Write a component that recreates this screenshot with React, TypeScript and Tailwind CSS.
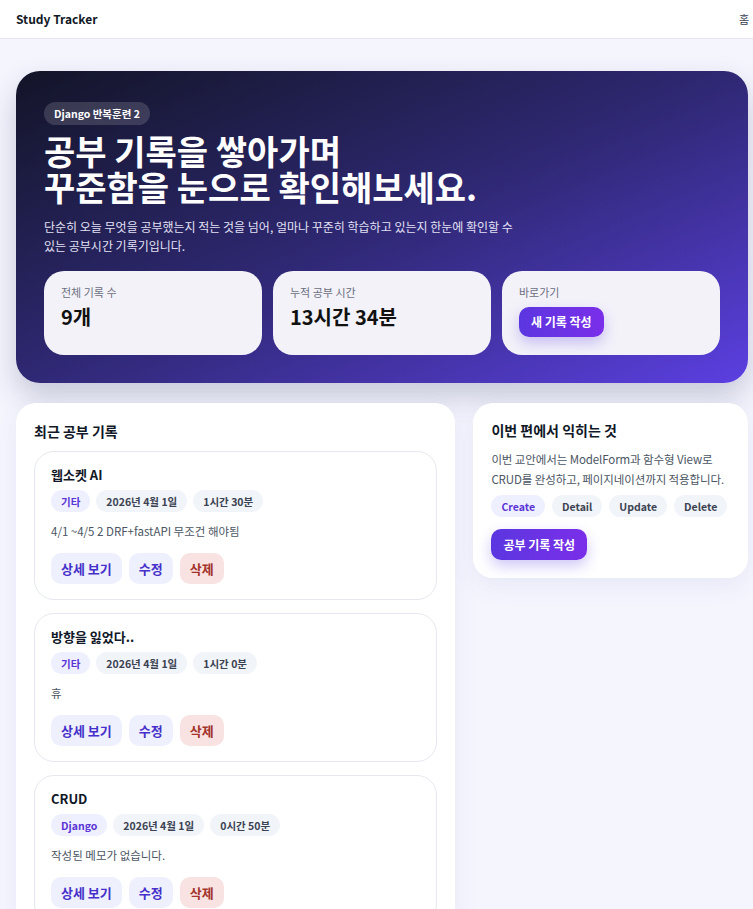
const font = { fontFamily: '"Noto Sans CJK KR", "Noto Sans", sans-serif' };

type Rec = {
  title: string;
  category: string;
  date: string;
  duration: string;
  memo: string;
};

const records: Rec[] = [
  { title: "웹소켓 AI", category: "기타", date: "2026년 4월 1일", duration: "1시간 30분", memo: "4/1 ~4/5 2 DRF+fastAPI 무조건 해야됨" },
  { title: "방향을 잃었다..", category: "기타", date: "2026년 4월 1일", duration: "1시간 0분", memo: "휴" },
  { title: "CRUD", category: "Django", date: "2026년 4월 1일", duration: "0시간 50분", memo: "작성된 메모가 없습니다." },
];

function Chip({ label, accent = false }: { label: string; accent?: boolean }) {
  return (
    <span
      className={`inline-flex h-[22px] items-center rounded-full px-[10px] text-[10.5px] font-bold ${
        accent ? "bg-[#eef0ff] text-[#5b34d6]" : "bg-[#f1f4f9] text-[#3b4252]"
      }`}
    >
      {label}
    </span>
  );
}

function RecordCard({ rec }: { rec: Rec }) {
  return (
    <div className="rounded-[20px] border border-[#e6e8f1] bg-white px-4 pt-[13px] pb-[15px]">
      <div className="text-[13px] font-bold leading-5 text-[#111827]">{rec.title}</div>
      <div className="mt-[5px] flex gap-[6px]">
        <Chip label={rec.category} accent />
        <Chip label={rec.date} />
        <Chip label={rec.duration} />
      </div>
      <p className="mt-[9px] text-[11.5px] leading-5 text-[#4b5563]">{rec.memo}</p>
      <div className="mt-3 flex gap-[7px]">
        <button className="h-[31px] rounded-[10px] bg-[#eef0fe] px-[10px] text-[13px] font-bold text-[#4630c9]">상세 보기</button>
        <button className="h-[31px] rounded-[10px] bg-[#eef0fe] px-[10px] text-[13px] font-bold text-[#4630c9]">수정</button>
        <button className="h-[31px] rounded-[10px] bg-[#f8e2e2] px-[10px] text-[13px] font-bold text-[#a3342b]">삭제</button>
      </div>
    </div>
  );
}

function StatCard({ label, children }: { label: string; children: React.ReactNode }) {
  return (
    <div className="h-[84px] rounded-[20px] bg-[#f3f2f9] px-[17px] pt-[13px]">
      <div className="text-[11px] leading-4 text-[#6b6f80]">{label}</div>
      {children}
    </div>
  );
}

export default function App() {
  return (
    <div style={font} className="min-h-[909px] bg-[#f4f5fd] text-[#111827]">
      <header className="flex h-[39px] items-center justify-between border-b border-[#e6e7ee] bg-white pl-4 pr-[4px]">
        <span className="text-[12px] font-bold">Study Tracker</span>
        <span className="text-[11px] text-[#374151]">홈</span>
      </header>

      <main className="pl-4 pr-[5px] pt-8">
        <section className="rounded-[24px] bg-gradient-to-br from-[#131428] via-[#2f2874] to-[#5c3fe2] px-7 pt-7 pb-7 shadow-[0_14px_30px_rgba(40,40,90,0.22)]">
          <span className="inline-flex h-[23px] items-center rounded-full bg-white/15 px-[10px] text-[10.5px] font-bold text-white">
            Django 반복훈련 2
          </span>
          <h1 className="mt-[8px] text-[34px] font-bold leading-[36px] text-white">
            <span className="block">공부 기록을 쌓아가며</span>
            <span className="block">꾸준함을 눈으로 확인해보세요.</span>
          </h1>
          <p className="mt-[12px] max-w-[480px] break-keep text-[12px] leading-[19px] text-[#e3e1f5]">
            단순히 오늘 무엇을 공부했는지 적는 것을 넘어, 얼마나 꾸준히 학습하고 있는지 한눈에 확인할 수 있는 공부시간 기록기입니다.
          </p>
          <div className="mt-4 grid grid-cols-3 gap-[11px]">
            <StatCard label="전체 기록 수">
              <div className="mt-[3px] text-[20px] font-bold leading-7 text-[#111]">9개</div>
            </StatCard>
            <StatCard label="누적 공부 시간">
              <div className="mt-[3px] text-[20px] font-bold leading-7 text-[#111]">13시간 34분</div>
            </StatCard>
            <StatCard label="바로가기">
              <button className="mt-[7px] h-[30px] rounded-[10px] bg-gradient-to-r from-[#5b36e0] to-[#7a2ee9] px-3 text-[12px] font-bold text-white shadow-[0_6px_14px_rgba(100,70,230,0.3)]">
                새 기록 작성
              </button>
            </StatCard>
          </div>
        </section>

        <div className="mt-[20px] grid grid-cols-[1.6fr_1fr] items-start gap-[18px]">
          <section className="rounded-[20px] bg-white px-[18px] pt-[18px] pb-[18px] shadow-[0_8px_24px_rgba(90,90,160,0.08)]">
            <h2 className="text-[14px] font-bold leading-5">최근 공부 기록</h2>
            <div className="mt-[10px] flex flex-col gap-[13px]">
              {records.map((r) => (
                <RecordCard key={r.title} rec={r} />
              ))}
            </div>
          </section>

          <section className="rounded-[20px] bg-white px-[18px] pt-[17px] pb-[18px] shadow-[0_8px_24px_rgba(90,90,160,0.08)]">
            <h2 className="text-[14px] font-bold leading-5">이번 편에서 익히는 것</h2>
            <p className="mt-[9px] text-[11.5px] leading-5 tracking-[-0.1px] text-[#4b5563]">
              이번 교안에서는 ModelForm과 함수형 View로 CRUD를 완성하고, 페이지네이션까지 적용합니다.
            </p>
            <div className="mt-[6px] flex gap-[7px]">
              <Chip label="Create" accent />
              <Chip label="Detail" />
              <Chip label="Update" />
              <Chip label="Delete" />
            </div>
            <button className="mt-3 h-[31px] rounded-[10px] bg-gradient-to-r from-[#5b36e0] to-[#7a2ee9] px-3 text-[12px] font-bold text-white shadow-[0_6px_14px_rgba(100,70,230,0.3)]">
              공부 기록 작성
            </button>
          </section>
        </div>
      </main>
    </div>
  );
}
